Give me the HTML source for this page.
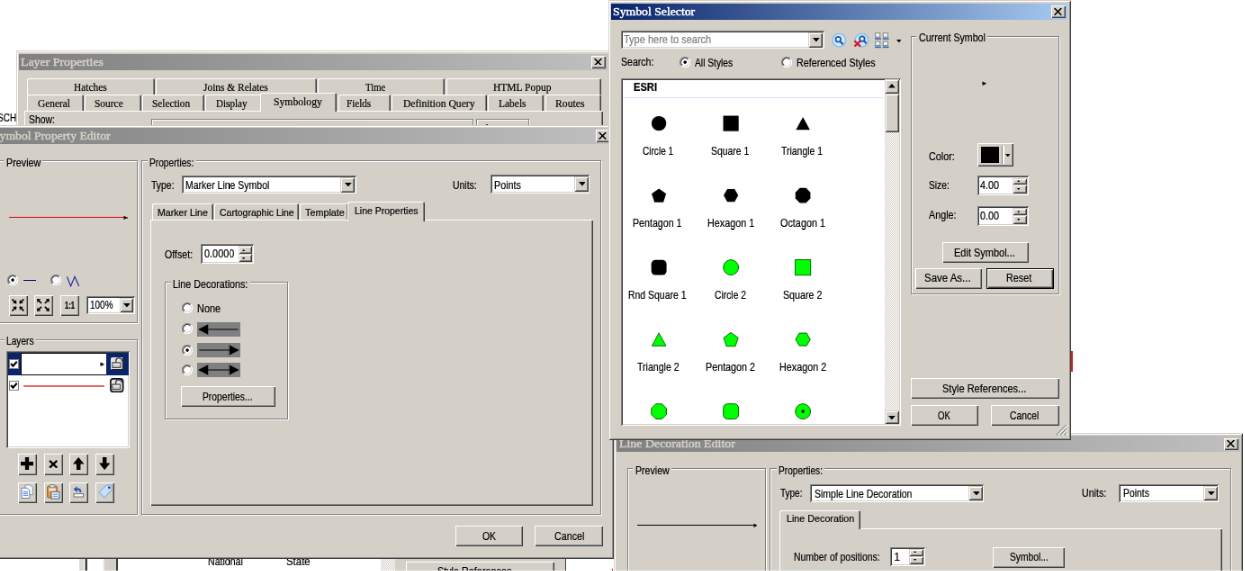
<!DOCTYPE html>
<html lang="en"><head><meta charset="utf-8"><title>Symbol Selector</title>
<style>
html,body{margin:0;padding:0;background:#fff}
html{overflow:hidden;width:1245px;height:571px}
body{width:1245px;height:571px;position:relative;overflow:hidden;font-family:"Liberation Sans",sans-serif;font-size:10px;color:#000}
.a{position:absolute;box-sizing:border-box;display:block}
.t{white-space:pre;transform-origin:0 0}
.f-s{font-family:"Liberation Sans",sans-serif;-webkit-text-stroke:0.2px currentColor}
.f-r{font-family:"Liberation Serif",serif;-webkit-text-stroke:0.2px currentColor}
.ttl{-webkit-text-stroke:0.45px currentColor !important}
.win{background:#d4d0c8;box-shadow:inset 1px 1px #d4d0c8,inset -1px -1px #404040,inset 2px 2px #fff,inset -2px -2px #909090}
.btn{background:#d4d0c8;box-shadow:inset 1px 1px #fff,inset -1px -1px #404040,inset -2px -2px #909090}
.cbtn{background:#d4d0c8;box-shadow:inset 1px 1px #d4d0c8,inset -1px -1px #404040,inset 2px 2px #fff,inset -2px -2px #808080}
.sunk{box-shadow:inset 1px 1px #808080,inset -1px -1px #fff,inset 2px 2px #404040,inset -2px -2px #d4d0c8}
.grp{border:1px solid #808080;box-shadow:1px 1px 0 #fff,inset 1px 1px 0 #fff}
.tb{background:linear-gradient(90deg,#808080,#c0c0c0)}
.tb.act{background:linear-gradient(90deg,#0a246a,#a6caf0)}
.tab{background:#d4d0c8;border-radius:2px 2px 0 0;box-shadow:inset 1px 1px #fff,inset -1px 0 #404040,inset -2px 0 #808080}
.page{background:#d4d0c8;box-shadow:inset 1px 1px #fff,inset -1px -1px #404040,inset -2px -2px #808080}
#root{position:absolute;left:0;top:0;width:1383.33px;height:634.44px;overflow:hidden;transform:scale(0.9);transform-origin:0 0;will-change:transform}
</style></head>
<body>
<div id="root">
<span id="t1" class="a t f-s " style="left:-3.33px;top:124.54px;font-size:12.22px;line-height:12.22px;transform:scaleX(0.818);">SCH</span>
<div class="a " style="left:88px;top:621px;width:5px;height:13px;background:#dcdad4"></div>
<div class="a " style="left:94px;top:621px;width:1px;height:13px;background:#a0a0a0"></div>
<div class="a " style="left:95.11px;top:621.11px;width:1.44px;height:13.33px;background:#404040"></div>
<div class="a " style="left:114px;top:621px;width:2px;height:13px;background:#eeeeec"></div>
<div class="a " style="left:116px;top:621px;width:13px;height:13px;background:#d4d0c8"></div>
<div class="a " style="left:129.22px;top:621.11px;width:1.44px;height:13.33px;background:#404040"></div>
<span id="t2" class="a t f-s " style="left:231.11px;top:618.43px;font-size:12.22px;line-height:12.22px;transform:scaleX(0.867);">National</span>
<span id="t3" class="a t f-s " style="left:317.78px;top:618.43px;font-size:12.22px;line-height:12.22px;transform:scaleX(0.935);">State</span>
<div class="a " style="left:423px;top:621px;width:16px;height:13px;background:#eae8e4 repeating-conic-gradient(#fff 0 25%,#d4d0c8 0 50%) 0 0/2px 2px"></div>
<div class="a " style="left:439px;top:621px;width:190px;height:13px;background:#d4d0c8"></div>
<div class="a " style="left:628px;top:621px;width:1px;height:13px;background:#404040"></div>
<div class="a btn" style="left:451px;top:624px;width:165px;height:24px;"></div>
<span id="t4" class="a t f-s " style="left:485.89px;top:628.99px;font-size:12.22px;line-height:12.22px;transform:scaleX(0.885);">Style References...</span>
<div class="a " style="left:1190px;top:390px;width:2px;height:23px;background:#d02020"></div>
<div class="a " style="left:680px;top:632px;width:1px;height:2px;background:#d02020"></div>
<div class="a win" style="left:18px;top:56px;width:661px;height:123px;"></div>
<div class="a tb" style="left:21px;top:60px;width:654px;height:18px;"></div>
<span id="t5" class="a t f-r ttl" style="left:23px;top:63.10px;font-size:12.22px;line-height:12.22px;color:#d4d0c8;transform:scaleX(1.134);">Layer Properties</span>
<div class="a btn" style="left:657px;top:62px;width:16px;height:14px;"></div>
<svg class="a" style="left:660.22px;top:64.67px" width="8.89" height="7.78" viewBox="0 0 8 7"><path d="M0.5 0 L7.5 7 M7.5 0 L0.5 7" stroke="#000" stroke-width="1.4" fill="none"/></svg>
<div class="a page" style="left:27px;top:123px;width:643px;height:67px;"></div>
<div class="a tab" style="left:30px;top:87px;width:142px;height:19px;"></div>
<span id="t6" class="a t f-r " style="left:81.67px;top:91.10px;font-size:12.22px;line-height:12.22px;transform:scaleX(0.932);">Hatches</span>
<div class="a tab" style="left:173px;top:87px;width:179px;height:19px;"></div>
<span id="t7" class="a t f-r " style="left:225.56px;top:91.10px;font-size:12.22px;line-height:12.22px;transform:scaleX(0.934);">Joins &amp; Relates</span>
<div class="a tab" style="left:353px;top:87px;width:141px;height:19px;"></div>
<span id="t8" class="a t f-r " style="left:406.11px;top:91.10px;font-size:12.22px;line-height:12.22px;transform:scaleX(0.876);">Time</span>
<div class="a tab" style="left:496px;top:87px;width:172px;height:19px;"></div>
<span id="t9" class="a t f-r " style="left:547.78px;top:91.10px;font-size:12.22px;line-height:12.22px;transform:scaleX(0.941);">HTML Popup</span>
<div class="a tab" style="left:30px;top:105px;width:63px;height:18px;"></div>
<span id="t10" class="a t f-r " style="left:41.89px;top:108.65px;font-size:12.22px;line-height:12.22px;transform:scaleX(0.931);">General</span>
<div class="a tab" style="left:94px;top:105px;width:63px;height:18px;"></div>
<span id="t11" class="a t f-r " style="left:105.22px;top:108.65px;font-size:12.22px;line-height:12.22px;transform:scaleX(0.936);">Source</span>
<div class="a tab" style="left:158px;top:105px;width:69px;height:18px;"></div>
<span id="t12" class="a t f-r " style="left:169.44px;top:108.65px;font-size:12.22px;line-height:12.22px;transform:scaleX(0.926);">Selection</span>
<div class="a tab" style="left:228px;top:105px;width:63px;height:18px;"></div>
<span id="t13" class="a t f-r " style="left:240px;top:108.65px;font-size:12.22px;line-height:12.22px;transform:scaleX(0.906);">Display</span>
<div class="a tab" style="left:376px;top:105px;width:58px;height:18px;"></div>
<span id="t14" class="a t f-r " style="left:385.11px;top:108.65px;font-size:12.22px;line-height:12.22px;transform:scaleX(0.907);">Fields</span>
<div class="a tab" style="left:435px;top:105px;width:106px;height:18px;"></div>
<span id="t15" class="a t f-r " style="left:447.56px;top:108.65px;font-size:12.22px;line-height:12.22px;transform:scaleX(0.948);">Definition Query</span>
<div class="a tab" style="left:542px;top:105px;width:62px;height:18px;"></div>
<span id="t16" class="a t f-r " style="left:553.89px;top:108.65px;font-size:12.22px;line-height:12.22px;transform:scaleX(0.938);">Labels</span>
<div class="a tab" style="left:606px;top:105px;width:62px;height:18px;"></div>
<span id="t17" class="a t f-r " style="left:616.89px;top:108.65px;font-size:12.22px;line-height:12.22px;transform:scaleX(0.956);">Routes</span>
<div class="a tab sel" style="left:289px;top:103px;width:85px;height:21px;"></div>
<span id="t18" class="a t f-r " style="left:303.67px;top:106.76px;font-size:12.22px;line-height:12.22px;transform:scaleX(0.956);">Symbology</span>
<div class="a " style="left:290px;top:123px;width:82px;height:3px;background:#d4d0c8"></div>
<span id="t19" class="a t f-s " style="left:31.67px;top:127.43px;font-size:12.22px;line-height:12.22px;transform:scaleX(0.850);">Show:</span>
<div class="a " style="left:540.33px;top:138.11px;width:1.33px;height:1.11px;background:#303030"></div>
<div class="a grp" style="left:168px;top:132px;width:358px;height:22px;"></div>
<div class="a grp" style="left:529px;top:132px;width:59px;height:22px;"></div>
<div class="a win" style="left:-22px;top:139px;width:704px;height:482px;"></div>
<div class="a tb" style="left:-19px;top:142px;width:698px;height:18px;"></div>
<span id="t20" class="a t f-r ttl" style="left:-8.33px;top:145.32px;font-size:12.22px;line-height:12.22px;color:#d4d0c8;transform:scaleX(1.118);">Symbol Property Editor</span>
<div class="a btn" style="left:662px;top:144px;width:16px;height:14px;"></div>
<svg class="a" style="left:665.22px;top:146.89px" width="8.89" height="7.78" viewBox="0 0 8 7"><path d="M0.5 0 L7.5 7 M7.5 0 L0.5 7" stroke="#000" stroke-width="1.4" fill="none"/></svg>
<div class="a grp" style="left:-11px;top:178px;width:164px;height:181px;"></div>
<div class="a " style="left:4px;top:177px;width:43px;height:3px;background:#d4d0c8"></div>
<span id="t21" class="a t f-s " style="left:6.67px;top:174.54px;font-size:12.22px;line-height:12.22px;transform:scaleX(0.882);">Preview</span>
<div class="a " style="left:10px;top:240px;width:128.89px;height:1px;background:#ffa8a0"></div>
<div class="a " style="left:10px;top:241px;width:128.89px;height:1px;background:#a83030"></div>
<svg class="a" style="left:137.33px;top:239.56px" width="5" height="4" viewBox="0 0 4.5 3.6"><path d="M0.6 0.3 L3 1.7 L0.6 3.2" stroke="#000" stroke-width="1" fill="none"/><path d="M0 1.75 H4.4" stroke="#000" stroke-width="1"/></svg>
<svg class="a" style="left:7.78px;top:305px" width="12.22" height="12.22" viewBox="0 0 11 11"><circle cx="5.5" cy="5.5" r="5" fill="#fff"/><path d="M1.96 9.04 A5 5 0 0 1 9.04 1.96" stroke="#808080" stroke-width="1" fill="none"/><path d="M2.67 8.33 A4 4 0 0 1 8.33 2.67" stroke="#404040" stroke-width="1" fill="none"/><path d="M2.67 8.33 A4 4 0 0 0 8.33 2.67" stroke="#d4d0c8" stroke-width="1" fill="none"/><path d="M1.96 9.04 A5 5 0 0 0 9.04 1.96" stroke="#fff" stroke-width="1" fill="none"/><circle cx="5.5" cy="5.5" r="1.6" fill="#000"/></svg>
<svg class="a" style="left:55.56px;top:305px" width="12.22" height="12.22" viewBox="0 0 11 11"><circle cx="5.5" cy="5.5" r="5" fill="#fff"/><path d="M1.96 9.04 A5 5 0 0 1 9.04 1.96" stroke="#808080" stroke-width="1" fill="none"/><path d="M2.67 8.33 A4 4 0 0 1 8.33 2.67" stroke="#404040" stroke-width="1" fill="none"/><path d="M2.67 8.33 A4 4 0 0 0 8.33 2.67" stroke="#d4d0c8" stroke-width="1" fill="none"/><path d="M1.96 9.04 A5 5 0 0 0 9.04 1.96" stroke="#fff" stroke-width="1" fill="none"/></svg>
<div class="a " style="left:26px;top:311px;width:14px;height:1px;background:#000080"></div>
<svg class="a" style="left:73.33px;top:305.56px" width="16.67" height="13.33" viewBox="0 0 15 12"><path d="M1.3 1.2 L5 10.8 L9 1.2 L13.3 10.8" stroke="#2020a0" stroke-width="1" fill="none"/></svg>
<div class="a btn" style="left:10px;top:328px;width:21px;height:23px;"></div>
<div class="a btn" style="left:38px;top:328px;width:21px;height:23px;"></div>
<div class="a btn" style="left:67px;top:328px;width:21px;height:23px;"></div>
<svg class="a" style="left:13.11px;top:332.44px" width="13.89" height="13.89" viewBox="0 0 12.5 12.5"><path d="M0.39999999999999947 0.39999999999999947 L4.6 4.6" stroke="#000" stroke-width="1.5"/><path d="M4.6 4.6 L0.9999999999999996 4.6 L4.6 0.9999999999999996 Z" fill="#000"/><path d="M12.100000000000001 0.39999999999999947 L7.9 4.6" stroke="#000" stroke-width="1.5"/><path d="M7.9 4.6 L11.5 4.6 L7.9 0.9999999999999996 Z" fill="#000"/><path d="M0.39999999999999947 12.100000000000001 L4.6 7.9" stroke="#000" stroke-width="1.5"/><path d="M4.6 7.9 L0.9999999999999996 7.9 L4.6 11.5 Z" fill="#000"/><path d="M12.100000000000001 12.100000000000001 L7.9 7.9" stroke="#000" stroke-width="1.5"/><path d="M7.9 7.9 L11.5 7.9 L7.9 11.5 Z" fill="#000"/></svg>
<svg class="a" style="left:41.11px;top:332.44px" width="13.89" height="13.89" viewBox="0 0 12.5 12.5"><path d="M4.5 4.5 L0.3 0.3" stroke="#000" stroke-width="1.5"/><path d="M0.3 0.3 L3.9 0.3 L0.3 3.9 Z" fill="#000"/><path d="M7.999999999999999 4.5 L12.2 0.3" stroke="#000" stroke-width="1.5"/><path d="M12.2 0.3 L8.6 0.3 L12.2 3.9 Z" fill="#000"/><path d="M4.5 7.999999999999999 L0.3 12.2" stroke="#000" stroke-width="1.5"/><path d="M0.3 12.2 L3.9 12.2 L0.3 8.6 Z" fill="#000"/><path d="M7.999999999999999 7.999999999999999 L12.2 12.2" stroke="#000" stroke-width="1.5"/><path d="M12.2 12.2 L8.6 12.2 L12.2 8.6 Z" fill="#000"/></svg>
<span id="t22" class="a t f-s " style="left:71.78px;top:335.03px;font-size:10.33px;line-height:10.33px;font-weight:bold;transform:scaleX(0.744);">1:1</span>
<div class="a sunk" style="left:96px;top:329px;width:54px;height:20px;background:#fff"></div>
<div class="a cbtn" style="left:133px;top:331px;width:15px;height:16px;"></div>
<svg class="a" style="left:137.33px;top:336.67px" width="7.78" height="4.44" viewBox="0 0 7 4"><path d="M0 0 H7 L3.5 4 Z" fill="#000"/></svg>
<span id="t23" class="a t f-s " style="left:100px;top:333.21px;font-size:12.22px;line-height:12.22px;transform:scaleX(0.817);">100%</span>
<div class="a grp" style="left:-11px;top:377px;width:164px;height:195px;"></div>
<div class="a " style="left:5px;top:376px;width:35px;height:3px;background:#d4d0c8"></div>
<span id="t24" class="a t f-s " style="left:7.22px;top:373.43px;font-size:12.22px;line-height:12.22px;transform:scaleX(0.833);">Layers</span>
<div class="a sunk" style="left:7px;top:390px;width:137px;height:108px;background:#fff"></div>
<div class="a " style="left:9px;top:392px;width:134px;height:25px;background:#0a246a"></div>
<div class="a " style="left:23px;top:392px;width:95px;height:25px;background:#fff;border:1px solid #000;border-right:none"></div>
<svg class="a" style="left:111.11px;top:402.22px" width="5.56" height="5.56" viewBox="0 0 5 5"><path d="M0.5 1 L3.5 2.5 L0.5 4 M0 2.5 H3" stroke="#000" stroke-width="1" fill="none"/></svg>
<div class="a " style="left:10px;top:399px;width:11px;height:11px;background:#fff;border:1px solid #808080"></div>
<svg class="a" style="left:11.11px;top:400px" width="8.89" height="8.89" viewBox="0 0 8 8"><path d="M1 3.6 L3.1 6 L7 1.6" stroke="#000" stroke-width="2" fill="none"/></svg>
<div class="a " style="left:10px;top:423px;width:11px;height:11px;background:#fff;border:1px solid #808080"></div>
<svg class="a" style="left:11.11px;top:424.44px" width="8.89" height="8.89" viewBox="0 0 8 8"><path d="M1 3.6 L3.1 6 L7 1.6" stroke="#000" stroke-width="2" fill="none"/></svg>
<div class="a " style="left:26px;top:428px;width:90px;height:2px;background:#e46868"></div>
<svg class="a" style="left:123.11px;top:397.11px" width="13.89" height="14" viewBox="0 0 12.5 12.6"><rect x="0" y="0" width="12.5" height="12.6" rx="1.5" fill="#e4e4e4"/><path d="M12.0 1 V12.1 H1" stroke="#202020" fill="none"/><rect x="1.75" y="5.3" width="8" height="5" fill="#c8c8c8" stroke="#484848" stroke-width="1"/><path d="M5.25 5.3 V3.3 Q5.25 0.7999999999999998 8.25 0.7999999999999998 Q11.25 0.7999999999999998 11.25 3.8" stroke="#404040" stroke-width="1.2" fill="none"/><path d="M2.25 7.0 H9.25" stroke="#fff" stroke-width="1"/></svg>
<svg class="a" style="left:122.22px;top:420.22px" width="15.56" height="16.22" viewBox="0 0 14 14.6"><rect x="0.8" y="0.8" width="12.4" height="13.0" rx="2.5" fill="#e4e4e4" stroke="#101010" stroke-width="1.5"/><rect x="2.5" y="6.3" width="8" height="5" fill="#c8c8c8" stroke="#484848" stroke-width="1"/><path d="M6.0 6.3 V4.3 Q6.0 1.7999999999999998 9.0 1.7999999999999998 Q12.0 1.7999999999999998 12.0 4.8" stroke="#404040" stroke-width="1.2" fill="none"/><path d="M3.0 8.0 H10.0" stroke="#fff" stroke-width="1"/></svg>
<div class="a btn" style="left:20px;top:504px;width:21px;height:24px;"></div>
<div class="a btn" style="left:20px;top:536px;width:21px;height:23px;"></div>
<div class="a btn" style="left:49px;top:504px;width:21px;height:24px;"></div>
<div class="a btn" style="left:49px;top:536px;width:21px;height:23px;"></div>
<div class="a btn" style="left:77px;top:504px;width:21px;height:24px;"></div>
<div class="a btn" style="left:77px;top:536px;width:21px;height:23px;"></div>
<div class="a btn" style="left:106px;top:504px;width:21px;height:24px;"></div>
<div class="a btn" style="left:106px;top:536px;width:21px;height:23px;"></div>
<svg class="a" style="left:23.11px;top:508.11px" width="14" height="14.11" viewBox="0 0 12.6 12.7"><path d="M6.3 0 V12.7 M0 6.35 H12.6" stroke="#000" stroke-width="3.8"/></svg>
<svg class="a" style="left:54px;top:510.67px" width="10.44" height="9.56" viewBox="0 0 9.4 8.6"><path d="M1 0.8 L8.4 7.8 M8.4 0.8 L1 7.8" stroke="#000" stroke-width="2.1"/></svg>
<svg class="a" style="left:81.11px;top:508.11px" width="12.44" height="14.11" viewBox="0 0 11.2 12.7"><path d="M5.6 0 L11.2 6.8 H7.6 V12.7 H3.6 V6.8 H0 Z" fill="#000"/></svg>
<svg class="a" style="left:110px;top:508.11px" width="12.44" height="14.11" viewBox="0 0 11.2 12.7"><path d="M5.6 12.7 L11.2 5.9 H7.6 V0 H3.6 V5.9 H0 Z" fill="#000"/></svg>
<svg class="a" style="left:23.33px;top:538.33px" width="14.44" height="16.67" viewBox="0 0 13 15"><path d="M4.5 0.8 H9.5 L12 3.3 V10.5 H4.5 Z" fill="#f4f8fc" stroke="#8890a0" stroke-width="0.9"/><path d="M0.8 3.8 H6.5 L8.8 6.1 V14 H0.8 Z" fill="#f8fbff" stroke="#7080a0" stroke-width="0.9"/><path d="M2.3 7.5 H7.2 M2.3 9.3 H7.2 M2.3 11.1 H7.2" stroke="#6aa0e0" stroke-width="1"/></svg>
<svg class="a" style="left:52.22px;top:537.78px" width="14.44" height="17.22" viewBox="0 0 13 15.5"><rect x="0.6" y="2" width="9.6" height="11.4" rx="1" fill="#e09848" stroke="#a06420" stroke-width="1"/><rect x="3" y="0.5" width="5" height="3" rx="0.8" fill="#d8d8d8" stroke="#707070" stroke-width="0.8"/><rect x="2.2" y="4" width="6.6" height="3" fill="#f4e4c8"/><rect x="4.5" y="7.5" width="8" height="7" fill="#f8fbff" stroke="#606880" stroke-width="1"/><path d="M6 10 H11 M6 12 H11" stroke="#6aa0e0" stroke-width="1"/></svg>
<svg class="a" style="left:81.11px;top:540px" width="13.33" height="13.33" viewBox="0 0 12 12"><path d="M2.8 3.2 H5.2 Q7.6 3.2 7.6 6.4" stroke="#2058b8" stroke-width="1.7" fill="none"/><path d="M0.6 3.2 L4.2 0.2 V6.2 Z" fill="#2058b8"/><rect x="1" y="7.8" width="9.4" height="3" fill="#fff" stroke="#707070" stroke-width="0.9"/></svg>
<svg class="a" style="left:108.89px;top:537.78px" width="16.11" height="16.11" viewBox="0 0 14.5 14.5"><path d="M0.8 8.2 L8.2 1 L13 0.8 L13.6 5.6 L6.4 13.4 Z" fill="#c4e2f8" stroke="#88b4dc" stroke-width="1"/><circle cx="11" cy="3.4" r="1.1" fill="#203040"/></svg>
<div class="a grp" style="left:157px;top:178px;width:511px;height:394px;"></div>
<div class="a " style="left:164px;top:177px;width:54px;height:3px;background:#d4d0c8"></div>
<span id="t25" class="a t f-s " style="left:166.33px;top:174.54px;font-size:12.22px;line-height:12.22px;transform:scaleX(0.833);">Properties:</span>
<span id="t26" class="a t f-s " style="left:167.78px;top:200.10px;font-size:12.22px;line-height:12.22px;transform:scaleX(0.855);">Type:</span>
<div class="a sunk" style="left:202px;top:195px;width:194px;height:20px;background:#fff"></div>
<div class="a cbtn" style="left:378px;top:197px;width:16px;height:17px;"></div>
<svg class="a" style="left:382.89px;top:202.56px" width="7.78" height="4.44" viewBox="0 0 7 4"><path d="M0 0 H7 L3.5 4 Z" fill="#000"/></svg>
<span id="t27" class="a t f-s " style="left:206.11px;top:200.10px;font-size:12.22px;line-height:12.22px;transform:scaleX(0.859);">Marker Line Symbol</span>
<span id="t28" class="a t f-s " style="left:503.33px;top:200.10px;font-size:12.22px;line-height:12.22px;transform:scaleX(0.854);">Units:</span>
<div class="a sunk" style="left:545px;top:194px;width:110px;height:21px;background:#fff"></div>
<div class="a cbtn" style="left:638px;top:196px;width:16px;height:17px;"></div>
<svg class="a" style="left:642.56px;top:202.22px" width="7.78" height="4.44" viewBox="0 0 7 4"><path d="M0 0 H7 L3.5 4 Z" fill="#000"/></svg>
<span id="t29" class="a t f-s " style="left:548.89px;top:199.54px;font-size:12.22px;line-height:12.22px;transform:scaleX(0.883);">Points</span>
<div class="a tab" style="left:169px;top:226px;width:68px;height:18px;"></div>
<span id="t30" class="a t f-s " style="left:174.89px;top:231.04px;font-size:11.11px;line-height:11.11px;transform:scaleX(0.953);">Marker Line</span>
<div class="a tab" style="left:238px;top:226px;width:94px;height:18px;"></div>
<span id="t31" class="a t f-s " style="left:243.56px;top:231.04px;font-size:11.11px;line-height:11.11px;transform:scaleX(0.943);">Cartographic Line</span>
<div class="a tab" style="left:333px;top:226px;width:54px;height:18px;"></div>
<span id="t32" class="a t f-s " style="left:338.67px;top:231.04px;font-size:11.11px;line-height:11.11px;transform:scaleX(0.971);">Template</span>
<div class="a page" style="left:167px;top:244px;width:492px;height:318px;"></div>
<div class="a tab sel" style="left:386px;top:224px;width:86px;height:22px;"></div>
<span id="t33" class="a t f-s " style="left:394px;top:228.82px;font-size:11.11px;line-height:11.11px;transform:scaleX(0.943);">Line Properties</span>
<div class="a " style="left:388px;top:244px;width:82px;height:3px;background:#d4d0c8"></div>
<span id="t34" class="a t f-s " style="left:183.33px;top:276.76px;font-size:12.22px;line-height:12.22px;transform:scaleX(0.869);">Offset:</span>
<div class="a sunk" style="left:223px;top:271px;width:59px;height:22px;background:#fff"></div>
<div class="a cbtn" style="left:265px;top:273px;width:15px;height:9px;"></div>
<div class="a cbtn" style="left:265px;top:282px;width:15px;height:9px;"></div>
<svg class="a" style="left:269.22px;top:276.67px" width="3.33" height="2.22" viewBox="0 0 3 2"><path d="M0 2 H3 L1.5 0 Z" fill="#000"/></svg>
<svg class="a" style="left:269.22px;top:285.56px" width="3.33" height="2.22" viewBox="0 0 3 2"><path d="M0 0 H3 L1.5 2 Z" fill="#000"/></svg>
<span id="t35" class="a t f-s " style="left:226.67px;top:275.65px;font-size:12.22px;line-height:12.22px;transform:scaleX(0.892);">0.0000</span>
<div class="a grp" style="left:183px;top:313px;width:137px;height:153px;"></div>
<div class="a " style="left:190px;top:312px;width:88px;height:4px;background:#d4d0c8"></div>
<span id="t36" class="a t f-s " style="left:192.22px;top:309.54px;font-size:12.22px;line-height:12.22px;transform:scaleX(0.876);">Line Decorations:</span>
<svg class="a" style="left:202.22px;top:336.11px" width="12.22" height="12.22" viewBox="0 0 11 11"><circle cx="5.5" cy="5.5" r="5" fill="#fff"/><path d="M1.96 9.04 A5 5 0 0 1 9.04 1.96" stroke="#808080" stroke-width="1" fill="none"/><path d="M2.67 8.33 A4 4 0 0 1 8.33 2.67" stroke="#404040" stroke-width="1" fill="none"/><path d="M2.67 8.33 A4 4 0 0 0 8.33 2.67" stroke="#d4d0c8" stroke-width="1" fill="none"/><path d="M1.96 9.04 A5 5 0 0 0 9.04 1.96" stroke="#fff" stroke-width="1" fill="none"/></svg>
<svg class="a" style="left:202.22px;top:359.44px" width="12.22" height="12.22" viewBox="0 0 11 11"><circle cx="5.5" cy="5.5" r="5" fill="#fff"/><path d="M1.96 9.04 A5 5 0 0 1 9.04 1.96" stroke="#808080" stroke-width="1" fill="none"/><path d="M2.67 8.33 A4 4 0 0 1 8.33 2.67" stroke="#404040" stroke-width="1" fill="none"/><path d="M2.67 8.33 A4 4 0 0 0 8.33 2.67" stroke="#d4d0c8" stroke-width="1" fill="none"/><path d="M1.96 9.04 A5 5 0 0 0 9.04 1.96" stroke="#fff" stroke-width="1" fill="none"/></svg>
<svg class="a" style="left:202.22px;top:382.78px" width="12.22" height="12.22" viewBox="0 0 11 11"><circle cx="5.5" cy="5.5" r="5" fill="#fff"/><path d="M1.96 9.04 A5 5 0 0 1 9.04 1.96" stroke="#808080" stroke-width="1" fill="none"/><path d="M2.67 8.33 A4 4 0 0 1 8.33 2.67" stroke="#404040" stroke-width="1" fill="none"/><path d="M2.67 8.33 A4 4 0 0 0 8.33 2.67" stroke="#d4d0c8" stroke-width="1" fill="none"/><path d="M1.96 9.04 A5 5 0 0 0 9.04 1.96" stroke="#fff" stroke-width="1" fill="none"/><circle cx="5.5" cy="5.5" r="1.6" fill="#000"/></svg>
<svg class="a" style="left:202.22px;top:405px" width="12.22" height="12.22" viewBox="0 0 11 11"><circle cx="5.5" cy="5.5" r="5" fill="#fff"/><path d="M1.96 9.04 A5 5 0 0 1 9.04 1.96" stroke="#808080" stroke-width="1" fill="none"/><path d="M2.67 8.33 A4 4 0 0 1 8.33 2.67" stroke="#404040" stroke-width="1" fill="none"/><path d="M2.67 8.33 A4 4 0 0 0 8.33 2.67" stroke="#d4d0c8" stroke-width="1" fill="none"/><path d="M1.96 9.04 A5 5 0 0 0 9.04 1.96" stroke="#fff" stroke-width="1" fill="none"/></svg>
<span id="t37" class="a t f-s " style="left:219.44px;top:336.76px;font-size:12.22px;line-height:12.22px;transform:scaleX(0.894);">None</span>
<div class="a " style="left:219px;top:358px;width:48px;height:16px;background:#808080"></div>
<svg class="a" style="left:218.89px;top:358.33px" width="47.78" height="16.11" viewBox="0 0 43 14.5"><path d="M2 7.2 H41" stroke="#000" stroke-width="1"/><path d="M1 7.2 L11 2 V12.4 Z" fill="#000"/></svg>
<div class="a " style="left:219px;top:381px;width:48px;height:16px;background:#808080"></div>
<svg class="a" style="left:218.89px;top:381.11px" width="47.78" height="16.11" viewBox="0 0 43 14.5"><path d="M2 7.2 H41" stroke="#000" stroke-width="1"/><path d="M42 7.2 L32 2 V12.4 Z" fill="#000"/></svg>
<div class="a " style="left:219px;top:403px;width:48px;height:16px;background:#808080"></div>
<svg class="a" style="left:218.89px;top:403.33px" width="47.78" height="16.11" viewBox="0 0 43 14.5"><path d="M2 7.2 H41" stroke="#000" stroke-width="1"/><path d="M1 7.2 L11 2 V12.4 Z" fill="#000"/><path d="M42 7.2 L32 2 V12.4 Z" fill="#000"/></svg>
<div class="a btn" style="left:201px;top:429px;width:105px;height:23px;"></div>
<span id="t38" class="a t f-s " style="left:225px;top:434.54px;font-size:12.22px;line-height:12.22px;transform:scaleX(0.843);">Properties...</span>
<div class="a btn" style="left:506px;top:584px;width:75px;height:23px;"></div>
<span id="t39" class="a t f-s " style="left:536.11px;top:589.54px;font-size:12.22px;line-height:12.22px;transform:scaleX(0.850);">OK</span>
<div class="a btn" style="left:594px;top:584px;width:76px;height:23px;"></div>
<span id="t40" class="a t f-s " style="left:616.11px;top:589.54px;font-size:12.22px;line-height:12.22px;transform:scaleX(0.876);">Cancel</span>
<div class="a win" style="left:682px;top:481px;width:699px;height:167px;"></div>
<div class="a tb" style="left:685px;top:484px;width:693px;height:18px;"></div>
<span id="t41" class="a t f-r ttl" style="left:687.78px;top:487.10px;font-size:12.22px;line-height:12.22px;color:#d4d0c8;transform:scaleX(1.137);">Line Decoration Editor</span>
<div class="a btn" style="left:1360px;top:487px;width:16px;height:13px;"></div>
<svg class="a" style="left:1363.39px;top:488.83px" width="8.89" height="7.78" viewBox="0 0 8 7"><path d="M0.5 0 L7.5 7 M7.5 0 L0.5 7" stroke="#000" stroke-width="1.4" fill="none"/></svg>
<div class="a grp" style="left:697px;top:520px;width:154px;height:133px;"></div>
<div class="a " style="left:703px;top:519px;width:43px;height:3px;background:#d4d0c8"></div>
<span id="t42" class="a t f-s " style="left:705.56px;top:516.76px;font-size:12.22px;line-height:12.22px;transform:scaleX(0.869);">Preview</span>
<div class="a " style="left:707.78px;top:583px;width:131.11px;height:1.28px;background:#000"></div>
<svg class="a" style="left:836.67px;top:581.11px" width="4.44" height="5.56" viewBox="0 0 4 5"><path d="M0.5 1 L3 2.5 L0.5 4 M0 2.5 H3" stroke="#000" stroke-width="1" fill="none"/></svg>
<div class="a grp" style="left:855px;top:520px;width:513px;height:133px;"></div>
<div class="a " style="left:863px;top:519px;width:53px;height:3px;background:#d4d0c8"></div>
<span id="t43" class="a t f-s " style="left:864.89px;top:516.76px;font-size:12.22px;line-height:12.22px;transform:scaleX(0.829);">Properties:</span>
<span id="t44" class="a t f-s " style="left:866.67px;top:542.32px;font-size:12.22px;line-height:12.22px;transform:scaleX(0.818);">Type:</span>
<div class="a sunk" style="left:900px;top:538px;width:193px;height:20px;background:#fff"></div>
<div class="a cbtn" style="left:1076px;top:540px;width:16px;height:16px;"></div>
<svg class="a" style="left:1080.67px;top:545.56px" width="7.78" height="4.44" viewBox="0 0 7 4"><path d="M0 0 H7 L3.5 4 Z" fill="#000"/></svg>
<span id="t45" class="a t f-s " style="left:905px;top:542.88px;font-size:12.22px;line-height:12.22px;transform:scaleX(0.858);">Simple Line Decoration</span>
<span id="t46" class="a t f-s " style="left:1201.67px;top:542.32px;font-size:12.22px;line-height:12.22px;transform:scaleX(0.872);">Units:</span>
<div class="a sunk" style="left:1243px;top:538px;width:111px;height:20px;background:#fff"></div>
<div class="a cbtn" style="left:1337px;top:540px;width:16px;height:16px;"></div>
<svg class="a" style="left:1341.78px;top:545.56px" width="7.78" height="4.44" viewBox="0 0 7 4"><path d="M0 0 H7 L3.5 4 Z" fill="#000"/></svg>
<span id="t47" class="a t f-s " style="left:1247.78px;top:542.32px;font-size:12.22px;line-height:12.22px;transform:scaleX(0.850);">Points</span>
<div class="a page" style="left:866px;top:587px;width:492px;height:66px;"></div>
<div class="a tab sel" style="left:866px;top:567px;width:90px;height:21px;"></div>
<span id="t48" class="a t f-s " style="left:874px;top:571.37px;font-size:11.11px;line-height:11.11px;transform:scaleX(0.967);">Line Decoration</span>
<div class="a " style="left:867px;top:587px;width:87px;height:2px;background:#d4d0c8"></div>
<span id="t49" class="a t f-s " style="left:882.22px;top:613.43px;font-size:12.22px;line-height:12.22px;transform:scaleX(0.853);">Number of positions:</span>
<div class="a sunk" style="left:989px;top:608px;width:39px;height:21px;background:#fff"></div>
<div class="a cbtn" style="left:1010px;top:610px;width:16px;height:8px;"></div>
<div class="a cbtn" style="left:1010px;top:618px;width:16px;height:9px;"></div>
<svg class="a" style="left:1014.78px;top:612.22px" width="3.33" height="2.22" viewBox="0 0 3 2"><path d="M0 2 H3 L1.5 0 Z" fill="#000"/></svg>
<svg class="a" style="left:1014.78px;top:621.11px" width="3.33" height="2.22" viewBox="0 0 3 2"><path d="M0 0 H3 L1.5 2 Z" fill="#000"/></svg>
<span id="t50" class="a t f-s " style="left:993.33px;top:612.88px;font-size:12.22px;line-height:12.22px;">1</span>
<div class="a btn" style="left:1103px;top:608px;width:80px;height:23px;"></div>
<span id="t51" class="a t f-s " style="left:1121.67px;top:613.43px;font-size:12.22px;line-height:12.22px;transform:scaleX(0.840);">Symbol...</span>
<div class="a win" style="left:676px;top:0px;width:514px;height:489px;"></div>
<div class="a tb act" style="left:679px;top:4px;width:507px;height:18px;"></div>
<span id="t52" class="a t f-r ttl" style="left:681px;top:7.10px;font-size:12.22px;line-height:12.22px;color:#fff;transform:scaleX(1.124);">Symbol Selector</span>
<div class="a btn" style="left:1168px;top:6px;width:16px;height:14px;"></div>
<svg class="a" style="left:1171.33px;top:8.83px" width="8.89" height="7.78" viewBox="0 0 8 7"><path d="M0.5 0 L7.5 7 M7.5 0 L0.5 7" stroke="#000" stroke-width="1.4" fill="none"/></svg>
<div class="a sunk" style="left:690px;top:34px;width:226px;height:20px;background:#fff"></div>
<div class="a cbtn" style="left:898px;top:36px;width:16px;height:17px;"></div>
<svg class="a" style="left:902.89px;top:42.22px" width="7.78" height="4.44" viewBox="0 0 7 4"><path d="M0 0 H7 L3.5 4 Z" fill="#000"/></svg>
<span id="t53" class="a t f-s " style="left:692.78px;top:38.43px;font-size:12.22px;line-height:12.22px;color:#808080;transform:scaleX(0.900);">Type here to search</span>
<svg class="a" style="left:924.44px;top:35.56px" width="17.78" height="17.78" viewBox="0 0 16 16"><circle cx="7.5" cy="7.8" r="6.6" fill="#cfe8fc" stroke="#8cbce8" stroke-width="1.2"/><circle cx="6.6" cy="6.9" r="2.5" fill="#eef8ff" stroke="#1c5ca8" stroke-width="1.6"/><path d="M8.6 9 L11.4 12" stroke="#1c5ca8" stroke-width="2"/></svg>
<svg class="a" style="left:946.67px;top:35.56px" width="18.89" height="17.78" viewBox="0 0 17 16"><circle cx="9.4" cy="7.8" r="6.6" fill="#cfe8fc" stroke="#8cbce8" stroke-width="1.2"/><circle cx="9.8" cy="6.4" r="2.5" fill="#eef8ff" stroke="#1c5ca8" stroke-width="1.6"/><path d="M11.8 8.4 L14 11.2" stroke="#1c5ca8" stroke-width="2"/><path d="M2.2 8.4 L8.2 14 M8.2 8.4 L2.2 14" stroke="#d42020" stroke-width="2"/></svg>
<svg class="a" style="left:971.78px;top:36.44px" width="16.11" height="17.22" viewBox="0 0 14.5 15.5"><rect x="0.6" y="0.6" width="4.6" height="4" fill="#f8f8f8" stroke="#8c8c8c" stroke-width="1"/><path d="M0.0 6.3 H6.199999999999999" stroke="#2c6cc0" stroke-width="1.5"/><rect x="0.6" y="9" width="4.6" height="4" fill="#f8f8f8" stroke="#8c8c8c" stroke-width="1"/><path d="M0.0 14.7 H6.199999999999999" stroke="#2c6cc0" stroke-width="1.5"/><rect x="8.4" y="0.6" width="4.6" height="4" fill="#f8f8f8" stroke="#8c8c8c" stroke-width="1"/><path d="M7.800000000000001 6.3 H14.0" stroke="#2c6cc0" stroke-width="1.5"/><rect x="8.4" y="9" width="4.6" height="4" fill="#f8f8f8" stroke="#8c8c8c" stroke-width="1"/><path d="M7.800000000000001 14.7 H14.0" stroke="#2c6cc0" stroke-width="1.5"/></svg>
<svg class="a" style="left:995.56px;top:43.89px" width="5.56" height="3.33" viewBox="0 0 5 3"><path d="M0 0 H5 L2.5 3 Z" fill="#000"/></svg>
<span id="t54" class="a t f-s " style="left:689.56px;top:63.43px;font-size:12.22px;line-height:12.22px;transform:scaleX(0.865);">Search:</span>
<svg class="a" style="left:754.67px;top:63.33px" width="12.22" height="12.22" viewBox="0 0 11 11"><circle cx="5.5" cy="5.5" r="5" fill="#fff"/><path d="M1.96 9.04 A5 5 0 0 1 9.04 1.96" stroke="#808080" stroke-width="1" fill="none"/><path d="M2.67 8.33 A4 4 0 0 1 8.33 2.67" stroke="#404040" stroke-width="1" fill="none"/><path d="M2.67 8.33 A4 4 0 0 0 8.33 2.67" stroke="#d4d0c8" stroke-width="1" fill="none"/><path d="M1.96 9.04 A5 5 0 0 0 9.04 1.96" stroke="#fff" stroke-width="1" fill="none"/><circle cx="5.5" cy="5.5" r="1.6" fill="#000"/></svg>
<span id="t55" class="a t f-s " style="left:772.22px;top:63.54px;font-size:12.22px;line-height:12.22px;transform:scaleX(0.840);">All Styles</span>
<svg class="a" style="left:867.78px;top:63.33px" width="12.22" height="12.22" viewBox="0 0 11 11"><circle cx="5.5" cy="5.5" r="5" fill="#fff"/><path d="M1.96 9.04 A5 5 0 0 1 9.04 1.96" stroke="#808080" stroke-width="1" fill="none"/><path d="M2.67 8.33 A4 4 0 0 1 8.33 2.67" stroke="#404040" stroke-width="1" fill="none"/><path d="M2.67 8.33 A4 4 0 0 0 8.33 2.67" stroke="#d4d0c8" stroke-width="1" fill="none"/><path d="M1.96 9.04 A5 5 0 0 0 9.04 1.96" stroke="#fff" stroke-width="1" fill="none"/></svg>
<span id="t56" class="a t f-s " style="left:884.67px;top:63.54px;font-size:12.22px;line-height:12.22px;transform:scaleX(0.877);">Referenced Styles</span>
<div class="a sunk" style="left:690px;top:87px;width:311px;height:386px;background:#fff"></div>
<div class="a " style="left:983px;top:89px;width:16px;height:382px;background:#eae8e4 repeating-conic-gradient(#fff 0 25%,#d4d0c8 0 50%) 0 0/2px 2px"></div>
<div class="a cbtn" style="left:983px;top:88px;width:16px;height:16px;"></div>
<svg class="a" style="left:987.22px;top:93.33px" width="7.78" height="4.44" viewBox="0 0 7 4"><path d="M0 4 H7 L3.5 0 Z" fill="#000"/></svg>
<div class="a cbtn" style="left:983px;top:104px;width:16px;height:43px;"></div>
<div class="a cbtn" style="left:983px;top:456px;width:16px;height:15px;"></div>
<svg class="a" style="left:987.22px;top:461.67px" width="7.78" height="4.44" viewBox="0 0 7 4"><path d="M0 0 H7 L3.5 4 Z" fill="#000"/></svg>
<span id="t57" class="a t f-s " style="left:704px;top:91.21px;font-size:12.22px;line-height:12.22px;font-weight:bold;transform:scaleX(0.911);">ESRI</span>
<div class="a " style="left:692px;top:108px;width:290px;height:1px;background:#d8e6f4"></div>
<svg class="a" style="left:721.11px;top:126.22px" width="22.22" height="22.22" viewBox="0 0 20 20"><circle cx="10" cy="10" r="7.4" fill="#000"/></svg>
<span id="t58" class="a t f-s " style="left:714.22px;top:161.54px;font-size:12.22px;line-height:12.22px;transform:scaleX(0.824);">Circle 1</span>
<svg class="a" style="left:801.11px;top:126.22px" width="22.22" height="22.22" viewBox="0 0 20 20"><rect x="2.3" y="2.3" width="15.4" height="15.4" fill="#000"/></svg>
<span id="t59" class="a t f-s " style="left:790px;top:161.54px;font-size:12.22px;line-height:12.22px;transform:scaleX(0.851);">Square 1</span>
<svg class="a" style="left:881.11px;top:126.22px" width="22.22" height="22.22" viewBox="0 0 20 20"><path d="M10 3.5 L17 16.5 H3 Z" fill="#000"/></svg>
<span id="t60" class="a t f-s " style="left:868.33px;top:161.54px;font-size:12.22px;line-height:12.22px;transform:scaleX(0.856);">Triangle 1</span>
<svg class="a" style="left:721.11px;top:205.67px" width="22.22" height="22.22" viewBox="0 0 20 20"><polygon points="10.00,2.40 17.23,7.65 14.47,16.15 5.53,16.15 2.77,7.65" fill="#000" transform="translate(0 0.7)"/></svg>
<span id="t61" class="a t f-s " style="left:703.33px;top:241.54px;font-size:12.22px;line-height:12.22px;transform:scaleX(0.871);">Pentagon 1</span>
<svg class="a" style="left:801.11px;top:205.67px" width="22.22" height="22.22" viewBox="0 0 20 20"><polygon points="17.30,10.00 13.65,16.32 6.35,16.32 2.70,10.00 6.35,3.68 13.65,3.68" fill="#000"/></svg>
<span id="t62" class="a t f-s " style="left:785.56px;top:241.54px;font-size:12.22px;line-height:12.22px;transform:scaleX(0.883);">Hexagon 1</span>
<svg class="a" style="left:881.11px;top:205.67px" width="22.22" height="22.22" viewBox="0 0 20 20"><polygon points="17.48,13.10 13.10,17.48 6.90,17.48 2.52,13.10 2.52,6.90 6.90,2.52 13.10,2.52 17.48,6.90" fill="#000"/></svg>
<span id="t63" class="a t f-s " style="left:866.67px;top:241.54px;font-size:12.22px;line-height:12.22px;transform:scaleX(0.887);">Octagon 1</span>
<svg class="a" style="left:721.11px;top:285.67px" width="22.22" height="22.22" viewBox="0 0 20 20"><rect x="2.4" y="2.4" width="15.2" height="15.2" rx="4.2" fill="#000"/></svg>
<span id="t64" class="a t f-s " style="left:698.33px;top:321.54px;font-size:12.22px;line-height:12.22px;transform:scaleX(0.855);">Rnd Square 1</span>
<svg class="a" style="left:801.11px;top:285.67px" width="22.22" height="22.22" viewBox="0 0 20 20"><circle cx="10" cy="10" r="7.6" fill="#00ff00" stroke="#0a6a0a" stroke-width="0.9"/></svg>
<span id="t65" class="a t f-s " style="left:793.89px;top:321.54px;font-size:12.22px;line-height:12.22px;transform:scaleX(0.845);">Circle 2</span>
<svg class="a" style="left:881.11px;top:285.67px" width="22.22" height="22.22" viewBox="0 0 20 20"><rect x="2.3" y="2.3" width="15.4" height="15.4" fill="#00ff00" stroke="#0a6a0a" stroke-width="0.9"/></svg>
<span id="t66" class="a t f-s " style="left:870px;top:321.54px;font-size:12.22px;line-height:12.22px;transform:scaleX(0.874);">Square 2</span>
<svg class="a" style="left:721.11px;top:365.67px" width="22.22" height="22.22" viewBox="0 0 20 20"><path d="M10 3.5 L17 16.5 H3 Z" fill="#00ff00" stroke="#0a6a0a" stroke-width="0.9"/></svg>
<span id="t67" class="a t f-s " style="left:707.78px;top:401.54px;font-size:12.22px;line-height:12.22px;transform:scaleX(0.866);">Triangle 2</span>
<svg class="a" style="left:801.11px;top:365.67px" width="22.22" height="22.22" viewBox="0 0 20 20"><polygon points="10.00,2.40 17.23,7.65 14.47,16.15 5.53,16.15 2.77,7.65" fill="#00ff00" stroke="#0a6a0a" stroke-width="0.9" transform="translate(0 0.7)"/></svg>
<span id="t68" class="a t f-s " style="left:783.89px;top:401.54px;font-size:12.22px;line-height:12.22px;transform:scaleX(0.880);">Pentagon 2</span>
<svg class="a" style="left:881.11px;top:365.67px" width="22.22" height="22.22" viewBox="0 0 20 20"><polygon points="17.30,10.00 13.65,16.32 6.35,16.32 2.70,10.00 6.35,3.68 13.65,3.68" fill="#00ff00" stroke="#0a6a0a" stroke-width="0.9"/></svg>
<span id="t69" class="a t f-s " style="left:865.56px;top:401.54px;font-size:12.22px;line-height:12.22px;transform:scaleX(0.883);">Hexagon 2</span>
<svg class="a" style="left:721.11px;top:445.67px" width="22.22" height="22.22" viewBox="0 0 20 20"><polygon points="17.48,13.10 13.10,17.48 6.90,17.48 2.52,13.10 2.52,6.90 6.90,2.52 13.10,2.52 17.48,6.90" fill="#00ff00" stroke="#0a6a0a" stroke-width="0.9"/></svg>
<svg class="a" style="left:801.11px;top:445.67px" width="22.22" height="22.22" viewBox="0 0 20 20"><rect x="2.4" y="2.4" width="15.2" height="15.2" rx="4.2" fill="#00ff00" stroke="#0a6a0a" stroke-width="0.9"/></svg>
<svg class="a" style="left:881.11px;top:445.67px" width="22.22" height="22.22" viewBox="0 0 20 20"><circle cx="10" cy="10" r="7.6" fill="#00ff00" stroke="#0a6a0a" stroke-width="0.9"/><circle cx="10" cy="10" r="1.6" fill="#000"/></svg>
<div class="a grp" style="left:1012px;top:40px;width:165px;height:287px;"></div>
<div class="a " style="left:1018px;top:39px;width:79px;height:3px;background:#d4d0c8"></div>
<span id="t70" class="a t f-s " style="left:1020.56px;top:36.21px;font-size:12.22px;line-height:12.22px;transform:scaleX(0.870);">Current Symbol</span>
<svg class="a" style="left:1091.11px;top:90px" width="5.56" height="5.56" viewBox="0 0 5 5"><path d="M0.5 1 L3.5 2.5 L0.5 4 M0 2.5 H3" stroke="#000" stroke-width="1" fill="none"/></svg>
<span id="t71" class="a t f-s " style="left:1031.67px;top:167.88px;font-size:12.22px;line-height:12.22px;transform:scaleX(0.886);">Color:</span>
<div class="a btn" style="left:1086px;top:159px;width:40px;height:26px;"></div>
<div class="a " style="left:1090px;top:163px;width:20px;height:18px;background:#000"></div>
<div class="a " style="left:1113px;top:162px;width:1px;height:20px;background:#808080"></div>
<div class="a " style="left:1114px;top:162px;width:2px;height:20px;background:#fff"></div>
<svg class="a" style="left:1116.67px;top:171.11px" width="5.56" height="3.33" viewBox="0 0 5 3"><path d="M0 0 H5 L2.5 3 Z" fill="#000"/></svg>
<span id="t72" class="a t f-s " style="left:1031.67px;top:200.10px;font-size:12.22px;line-height:12.22px;transform:scaleX(0.838);">Size:</span>
<div class="a sunk" style="left:1086px;top:195px;width:57px;height:22px;background:#fff"></div>
<div class="a cbtn" style="left:1125px;top:198px;width:16px;height:7px;"></div>
<div class="a cbtn" style="left:1125px;top:205px;width:16px;height:10px;"></div>
<svg class="a" style="left:1129.78px;top:199.78px" width="3.33" height="2.22" viewBox="0 0 3 2"><path d="M0 2 H3 L1.5 0 Z" fill="#000"/></svg>
<svg class="a" style="left:1129.78px;top:208.67px" width="3.33" height="2.22" viewBox="0 0 3 2"><path d="M0 0 H3 L1.5 2 Z" fill="#000"/></svg>
<span id="t73" class="a t f-s " style="left:1088.89px;top:200.10px;font-size:12.22px;line-height:12.22px;transform:scaleX(0.888);">4.00</span>
<span id="t74" class="a t f-s " style="left:1031.67px;top:233.43px;font-size:12.22px;line-height:12.22px;transform:scaleX(0.882);">Angle:</span>
<div class="a sunk" style="left:1086px;top:229px;width:57px;height:22px;background:#fff"></div>
<div class="a cbtn" style="left:1125px;top:231px;width:16px;height:8px;"></div>
<div class="a cbtn" style="left:1125px;top:239px;width:16px;height:10px;"></div>
<svg class="a" style="left:1129.78px;top:233.67px" width="3.33" height="2.22" viewBox="0 0 3 2"><path d="M0 2 H3 L1.5 0 Z" fill="#000"/></svg>
<svg class="a" style="left:1129.78px;top:242.56px" width="3.33" height="2.22" viewBox="0 0 3 2"><path d="M0 0 H3 L1.5 2 Z" fill="#000"/></svg>
<span id="t75" class="a t f-s " style="left:1088.89px;top:233.99px;font-size:12.22px;line-height:12.22px;transform:scaleX(0.888);">0.00</span>
<div class="a btn" style="left:1047px;top:269px;width:96px;height:23px;"></div>
<span id="t76" class="a t f-s " style="left:1060px;top:274.54px;font-size:12.22px;line-height:12.22px;transform:scaleX(0.899);">Edit Symbol...</span>
<div class="a btn" style="left:1017px;top:298px;width:74px;height:23px;"></div>
<span id="t77" class="a t f-s " style="left:1027.22px;top:303.43px;font-size:12.22px;line-height:12.22px;transform:scaleX(0.939);">Save As...</span>
<div class="a " style="left:1096px;top:298px;width:75px;height:23px;background:#000"></div>
<div class="a btn" style="left:1097px;top:299px;width:73px;height:21px;"></div>
<span id="t78" class="a t f-s " style="left:1118.33px;top:303.43px;font-size:12.22px;line-height:12.22px;transform:scaleX(0.888);">Reset</span>
<div class="a btn" style="left:1012px;top:420px;width:165px;height:23px;"></div>
<span id="t79" class="a t f-s " style="left:1046.67px;top:425.65px;font-size:12.22px;line-height:12.22px;transform:scaleX(0.904);">Style References...</span>
<div class="a btn" style="left:1012px;top:450px;width:75px;height:23px;"></div>
<span id="t80" class="a t f-s " style="left:1041.67px;top:455.65px;font-size:12.22px;line-height:12.22px;transform:scaleX(0.787);">OK</span>
<div class="a btn" style="left:1101px;top:450px;width:76px;height:23px;"></div>
<span id="t81" class="a t f-s " style="left:1121.67px;top:455.65px;font-size:12.22px;line-height:12.22px;transform:scaleX(0.847);">Cancel</span>
<svg class="a" style="left:1173.33px;top:471.11px" width="13.33" height="13.33" viewBox="0 0 12 12"><path d="M11 1 L1 11 M11 5 L5 11 M11 9 L9 11" stroke="#707070" stroke-width="1.2"/><path d="M12 1 L2 11 M12 5 L6 11 M12 9 L10 11" stroke="#fff" stroke-width="1"/></svg>
</div>
</body></html>
